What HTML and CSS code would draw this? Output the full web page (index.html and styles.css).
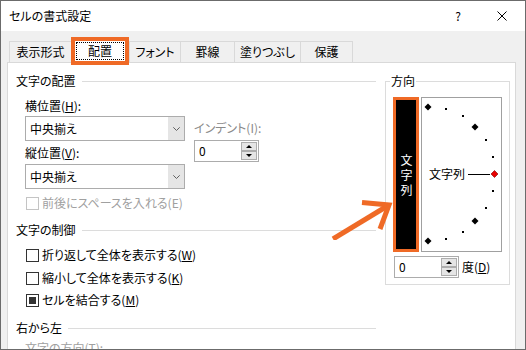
FILE: index.html
```html
<!DOCTYPE html>
<html lang="ja">
<head>
<meta charset="utf-8">
<title>セルの書式設定</title>
<link rel="stylesheet" href="styles.css">
</head>
<body>
<div class="window">
  <div class="titlebar">
    <span class="title">セルの書式設定</span>
    <span class="help">?</span>
    <svg class="close" width="10" height="10" viewBox="0 0 10 10"><path d="M0.5 0.5L9.5 9.5M9.5 0.5L0.5 9.5" stroke="#000" stroke-width="1" fill="none"/></svg>
  </div>
  <div class="client">
    <div class="tabs">
      <div class="tab t1">表示形式</div>
      <div class="tab sel"><span class="focus">配置</span></div>
      <div class="tab t3">フォント</div>
      <div class="tab t4">罫線</div>
      <div class="tab t5">塗りつぶし</div>
      <div class="tab t6">保護</div>
    </div>
    <div class="panel">
      <div class="leftcol">
        <div class="group-head"><span>文字の配置</span><i class="rule"></i></div>
        <div class="section">
          <div class="align-row">
            <div class="align-fields">
              <div class="label">横位置(<u>H</u>):</div>
              <div class="combo c1"><span class="val">中央揃え</span><span class="drop"><svg width="7" height="4" viewBox="0 0 7 4"><path d="M0.3 0.3L3.5 3.5L6.7 0.3" stroke="#606060" fill="none"/></svg></span></div>
              <div class="label l2">縦位置(<u>V</u>):</div>
              <div class="combo c2"><span class="val">中央揃え</span><span class="drop"><svg width="7" height="4" viewBox="0 0 7 4"><path d="M0.3 0.3L3.5 3.5L6.7 0.3" stroke="#606060" fill="none"/></svg></span></div>
            </div>
            <div class="indent-field">
              <div class="label dim">インデント(I):</div>
              <div class="spin"><span class="val">0</span><span class="btns"><b class="up"></b><b class="down"></b></span></div>
            </div>
          </div>
          <div class="check disabled c-space"><span class="box"></span>前後にスペースを入れる(E)</div>
        </div>
        <div class="group-head g2"><span>文字の制御</span><i class="rule"></i></div>
        <div class="section">
          <div class="check c-wrap"><span class="box"></span>折り返して全体を表示する(<u>W</u>)</div>
          <div class="check c-shrink"><span class="box"></span>縮小して全体を表示する(<u>K</u>)</div>
          <div class="check c-merge"><span class="box on"></span>セルを結合する(<u>M</u>)</div>
        </div>
        <div class="group-head g3"><span>右から左</span><i class="rule"></i></div>
        <div class="section">
          <div class="label dim2 l-dir">文字の方向(T):</div>
        </div>
      </div>
      <div class="orient">
        <span class="legend">方向</span>
        <div class="orient-main">
          <div class="vtext"><span>文字列</span></div>
          <div class="dial">
            <svg class="marks" width="79" height="153" viewBox="0 0 79 153">
              <g fill="#000">
                <polygon points="6,5.5 9.5,9 6,12.5 2.5,9"/>
                <polygon points="53,25.5 56.5,29 53,32.5 49.5,29"/>
                <polygon points="53,119.5 56.5,123 53,126.5 49.5,123"/>
                <polygon points="6,139.5 9.5,143 6,146.5 2.5,143"/>
              </g>
              <g fill="#000" shape-rendering="crispEdges">
                <rect x="23" y="10" width="2" height="2"/>
                <rect x="40" y="17" width="2" height="2"/>
                <rect x="63" y="41" width="2" height="2"/>
                <rect x="70" y="58" width="2" height="2"/>
                <rect x="70" y="92" width="2" height="2"/>
                <rect x="63" y="109" width="2" height="2"/>
                <rect x="40" y="133" width="2" height="2"/>
                <rect x="23" y="140" width="2" height="2"/>
              </g>
              <path d="M46 76.5H68" stroke="#000" stroke-width="1" shape-rendering="crispEdges"/>
              <polygon points="72.5,72.5 76,76 72.5,79.5 69,76" fill="#e80000" stroke="#7a0000" stroke-width="0.6"/>
            </svg>
            <span class="dial-text">文字列</span>
          </div>
        </div>
        <div class="deg-row">
          <div class="spin deg"><span class="val">0</span><span class="btns"><b class="up"></b><b class="down"></b></span></div>
          <span class="deg-label">度(<u>D</u>)</span>
        </div>
      </div>
    </div>
  </div>
  <svg class="arrow" width="80" height="50" viewBox="0 0 80 50">
    <path d="M8 49L64 15" stroke="#ef6a26" stroke-width="5" fill="none"/>
    <polyline points="37,12.5 64,15 55,39" stroke="#ef6a26" stroke-width="5" fill="none" stroke-linejoin="miter"/>
  </svg>
</div>
</body>
</html>
```

FILE: styles.css
```css
* { box-sizing: border-box; }
html, body { margin: 0; padding: 0; }
body {
  font-family: "Noto Sans CJK JP", "Noto Sans", sans-serif;
  font-size: 12px;
  line-height: 14px;
  color: #000;
  font-feature-settings: "palt";
  background: #fff;
}
u { text-decoration: underline; text-underline-offset: 1px; }

.window {
  position: relative;
  width: 526px;
  height: 350px;
  border: 1px solid #6b6b6b;
  background: #f0f0f0;
  overflow: hidden;
}

.titlebar {
  height: 30px;
  background: #fff;
  display: flex;
  align-items: center;
  padding-left: 8px;
}
.title { margin-top: 0; }
.help { margin-left: auto; margin-right: 36px; }
.close { display: block; margin-right: 18px; }

.client { padding: 10px 9px 0 6px; }

.tabs {
  display: flex;
  align-items: flex-end;
  height: 21px;
  padding-left: 2px;
}
.tab {
  height: 21px;
  border: 1px solid #d9d9d9;
  border-bottom: none;
  display: flex;
  align-items: center;
  justify-content: center;
  background: #f0f0f0;
}
.tab + .tab { margin-left: -1px; }
.t1 { width: 63px; }
.sel {
  width: 58px;
  height: 28px;
  margin-bottom: -3px;
  border: 4px solid #ef6a26;
  background: #fff;
  padding: 1px;
  position: relative;
  z-index: 1;
}
.sel .focus {
  flex: 1;
  align-self: stretch;
  border: 1px dotted #000;
  display: flex;
  align-items: center;
  justify-content: center;
}
.sel + .tab { margin-left: 0; }
.t3 { width: 52px; }
.t4 { width: 55px; }
.t5 { width: 67px; }
.t6 { width: 53px; }

.panel {
  height: 400px;
  background: #fff;
  border: 1px solid #d9d9d9;
  display: flex;
  align-items: flex-start;
  padding: 11px 5px 0 8px;
}

.leftcol {
  width: 360px;
  display: flex;
  flex-direction: column;
}
.group-head {
  display: flex;
  align-items: center;
  height: 14px;
}
.group-head .rule {
  flex: 1;
  height: 1px;
  background: #dcdcdc;
  margin-left: 6px;
}
.g2 { margin-top: 13px; }
.g3 { margin-top: 14px; }

.section {
  padding-left: 9px;
  display: flex;
  flex-direction: column;
}
.align-row {
  display: flex;
  margin-top: 11px;
}
.align-fields {
  width: 160px;
  display: flex;
  flex-direction: column;
}
.label { height: 14px; white-space: nowrap; }
.dim { color: #8a8a8a; }
.dim2 { color: #a0a0a0; }
.c1 { margin-top: 3px; }
.l2 { margin-top: 5px; }
.c2 { margin-top: 4px; }

.combo {
  height: 25px;
  border: 1px solid #acacac;
  background: #fff;
  display: flex;
}
.combo .val {
  flex: 1;
  padding-left: 4px;
  display: flex;
  align-items: center;
}
.combo .drop {
  width: 16px;
  background: #e5e5e5;
  display: flex;
  align-items: center;
  justify-content: center;
}
.combo .drop svg { display: block; }

.indent-field {
  margin-left: 9px;
  padding-top: 22px;
  display: flex;
  flex-direction: column;
}
.indent-field .spin { margin-top: 5px; }

.spin {
  width: 65px;
  height: 22px;
  border: 1px solid #acacac;
  background: #fff;
  display: flex;
  padding-left: 4px;
}
.spin .val {
  flex: 1;
  display: flex;
  align-items: center;
}
.spin .btns {
  display: flex;
  flex-direction: column;
  justify-content: space-between;
  padding: 1px 1px 1px 0;
}
.spin b {
  width: 16px;
  height: 9px;
  border: 1px solid #adadad;
  background: #e5e5e5;
  display: flex;
  align-items: center;
  justify-content: center;
}
.spin b::before {
  content: "";
  display: block;
  border-left: 3px solid transparent;
  border-right: 3px solid transparent;
}
.spin b.up::before { border-bottom: 3px solid #000; }
.spin b.down::before { border-top: 3px solid #000; }

.check {
  display: flex;
  align-items: center;
  height: 14px;
  margin-left: 1px;
  white-space: nowrap;
}
.check .box {
  width: 13px;
  height: 13px;
  border: 1px solid #333;
  margin-right: 3px;
  padding: 2px;
  flex: none;
}
.check .box.on::before {
  content: "";
  display: block;
  width: 7px;
  height: 7px;
  background: #333;
}
.check.disabled { color: #a0a0a0; }
.check.disabled .box { border-color: #c4c4c4; }
.c-space { margin-top: 7px; }
.c-wrap { margin-top: 11px; }
.c-shrink { margin-top: 9px; }
.c-merge { margin-top: 8px; }
.l-dir { margin-top: 6px; }

.orient {
  width: 125px;
  margin: 7px 0 0 9px;
  border: 1px solid #dcdcdc;
  display: flex;
  flex-direction: column;
  padding: 0 0 6px 7px;
}
.legend {
  align-self: flex-start;
  margin: -8px 0 0 -3px;
  padding: 0 1px;
  background: #fff;
  height: 14px;
}
.orient-main {
  display: flex;
  margin-top: 9px;
}
.vtext {
  width: 26px;
  height: 155px;
  border: 3px solid #ef6a26;
  background: #000;
  color: #fff;
  display: flex;
  align-items: center;
  justify-content: center;
}
.vtext span {
  writing-mode: vertical-rl;
  text-orientation: upright;
  letter-spacing: 3px;
  padding-top: 3px;
  line-height: 14px;
}
.dial {
  position: relative;
  width: 81px;
  height: 155px;
  margin-left: 2px;
  border: 1px solid #a0a0a0;
  background: #fff;
}
.marks { position: absolute; left: 0; top: 0; display: block; }
.dial-text {
  position: absolute;
  left: 7px;
  top: 69px;
  white-space: nowrap;
}
.deg-row {
  display: flex;
  align-items: center;
  margin-top: 4px;
}
.spin.deg { margin-left: 1px; }
.deg-label { margin-left: 3px; }

.arrow {
  position: absolute;
  left: 324px;
  top: 189px;
  display: block;
}
```
